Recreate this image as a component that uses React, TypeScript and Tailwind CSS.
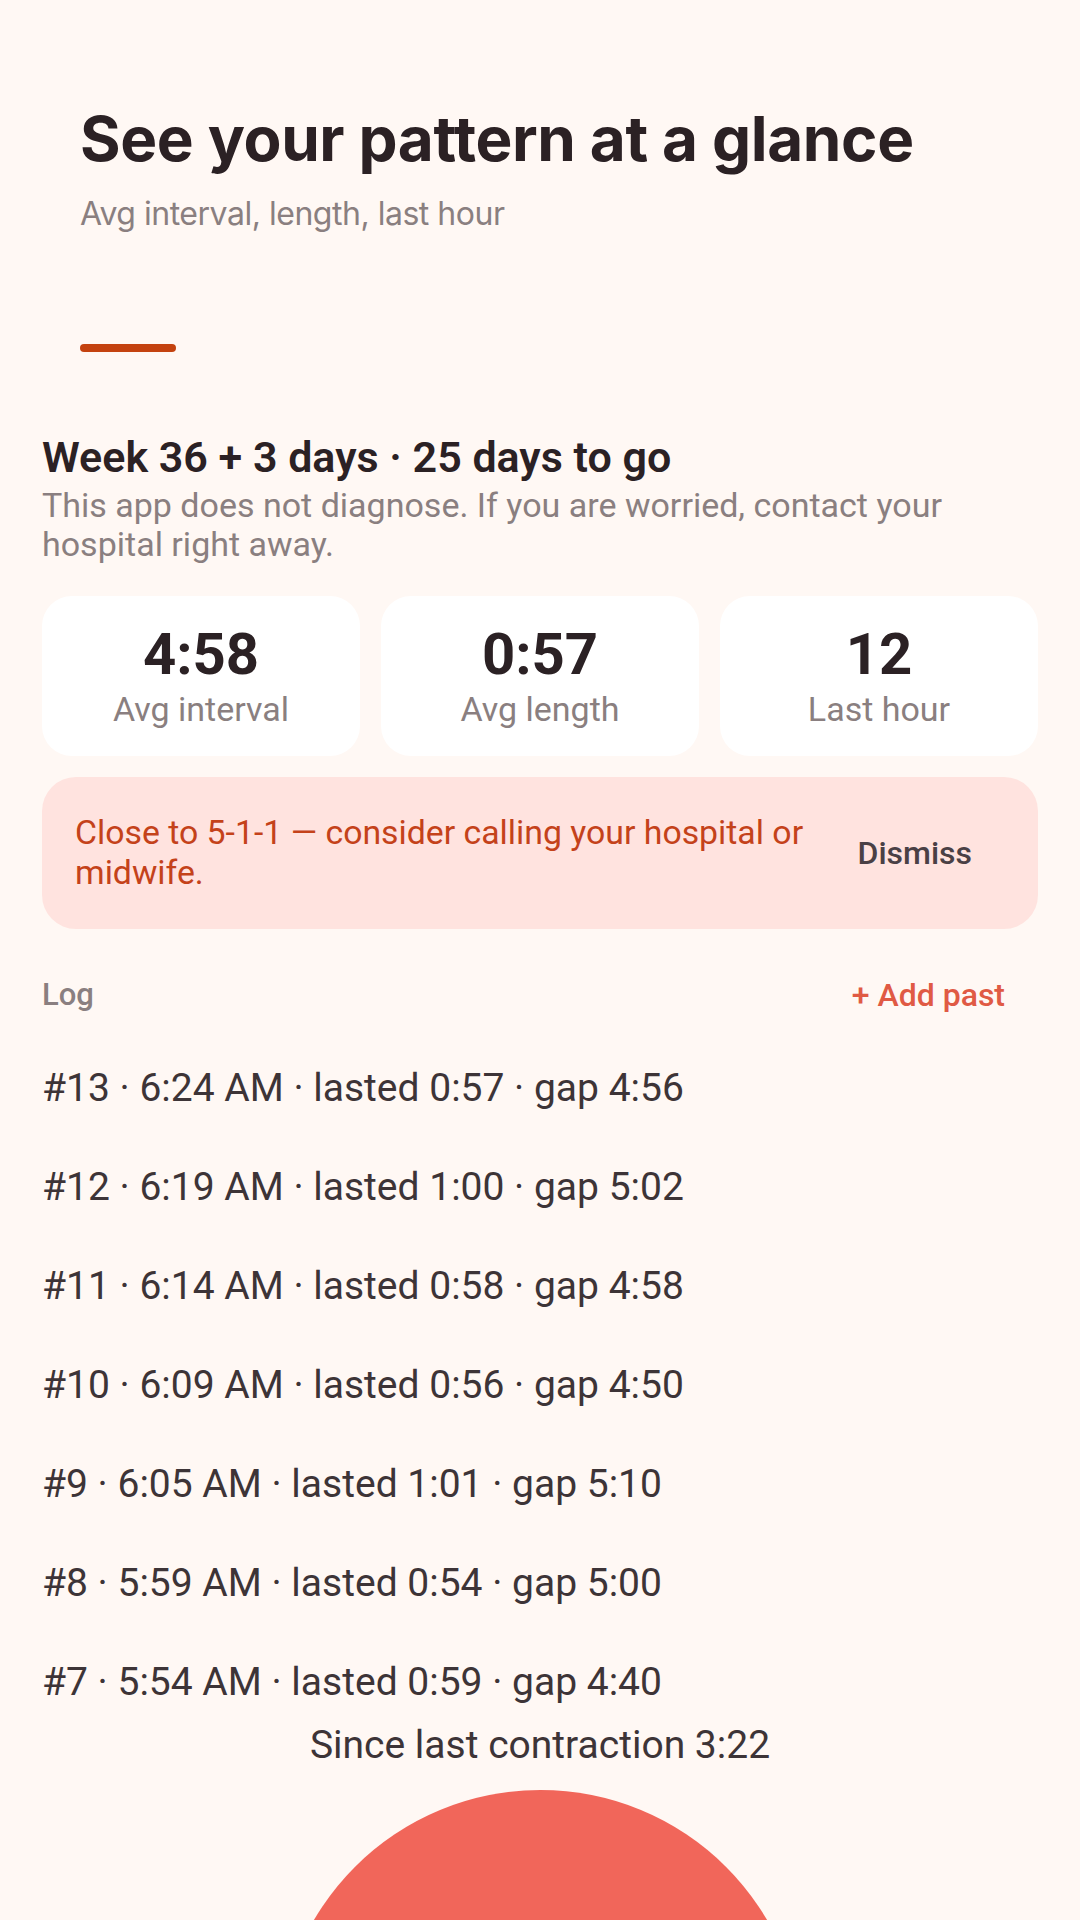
import React from "react";

type Stat = { value: string; label: string };

const stats: Stat[] = [
  { value: "4:58", label: "Avg interval" },
  { value: "0:57", label: "Avg length" },
  { value: "12", label: "Last hour" },
];

const log = [
  "#13 · 6:24 AM · lasted 0:57 · gap 4:56",
  "#12 · 6:19 AM · lasted 1:00 · gap 5:02",
  "#11 · 6:14 AM · lasted 0:58 · gap 4:58",
  "#10 · 6:09 AM · lasted 0:56 · gap 4:50",
  "#9 · 6:05 AM · lasted 1:01 · gap 5:10",
  "#8 · 5:59 AM · lasted 0:54 · gap 5:00",
  "#7 · 5:54 AM · lasted 0:59 · gap 4:40",
];

const StatCard: React.FC<Stat> = ({ value, label }) => (
  <div className="h-[160px] rounded-[30px] bg-white flex flex-col items-center pt-[28px]">
    <div className="text-[58px] leading-[60px] font-bold text-[#2b2124]">{value}</div>
    <div className="mt-[5px] text-[34px] leading-[40px] text-[#8a7f80]">{label}</div>
  </div>
);

export default function App() {
  return (
    <div className="h-[1920px] w-[1080px] overflow-hidden bg-[#fff8f4] font-['Roboto',sans-serif] flex flex-col">
      {/* header */}
      <div className="pl-[80px] pt-[102px] font-['Inter',sans-serif]">
        <h1 className="text-[62px] leading-[74px] font-bold tracking-[-0.006em] text-[#2b2124]">
          See your pattern at a glance
        </h1>
        <p className="mt-[18px] text-[32px] leading-[40px] tracking-[-0.015em] text-[#8a7f80]">
          Avg interval, length, last hour
        </p>
        <div className="mt-[110px] h-[8px] w-[96px] rounded-full bg-[#c4420f]" />
      </div>

      <div className="px-[42px] flex flex-col">
        <h2 className="mt-[80px] text-[43px] leading-[50px] font-semibold text-[#2b2124]">
          Week 36 + 3 days · 25 days to go
        </h2>
        <p className="mt-[4px] text-[34px] leading-[39px] text-[#8a7f80]">
          This app does not diagnose. If you are worried, contact your hospital right away.
        </p>

        <div className="mt-[32px] grid grid-cols-3 gap-[21px]">
          {stats.map((s) => (
            <StatCard key={s.label} {...s} />
          ))}
        </div>

        <div className="mt-[21px] h-[152px] rounded-[34px] bg-[#ffe3df] flex items-center pl-[33px] pr-[42px]">
          <p className="flex-1 text-[33.8px] leading-[40px] text-[#c4421a]">
            Close to 5-1-1 — consider calling your hospital or midwife.
          </p>
          <button className="ml-[16px] px-[24px] text-[32px] leading-[40px] font-medium text-[#4a4045]">
            Dismiss
          </button>
        </div>

        <div className="mt-[46px] h-[40px] flex items-center justify-between">
          <span className="text-[31px] leading-[40px] font-medium text-[#8a7f80]">Log</span>
          <button className="pr-[33px] text-[32px] leading-[40px] font-medium text-[#e05a44]">
            + Add past
          </button>
        </div>

        <div className="mt-[24px] h-[686px] overflow-hidden">
          {log.map((row) => (
            <div key={row} className="py-[30px] text-[39px] leading-[39px] text-[#3d3437]">
              {row}
            </div>
          ))}
        </div>
      </div>

      <div className="text-center text-[39px] leading-[40px] text-[#3d3437]">
        Since last contraction 3:22
      </div>
      <div className="mt-[25px] mx-auto w-[525px] h-[525px] shrink-0 rounded-full bg-[#f1665a]" />
    </div>
  );
}
